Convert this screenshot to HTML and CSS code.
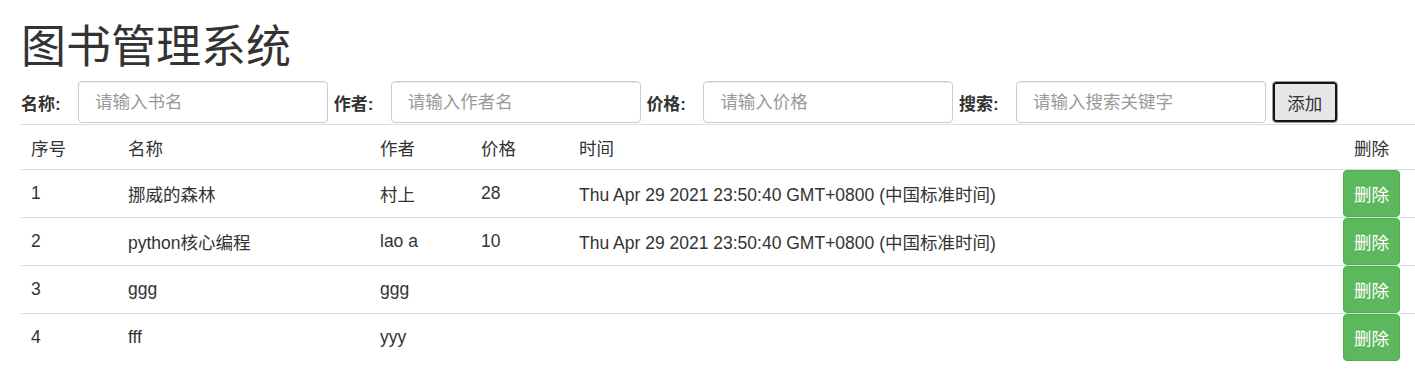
FILE: index.html
```html
<!DOCTYPE html>
<html lang="zh-CN">
<head>
<meta charset="utf-8">
<title>图书管理系统</title>
<link rel="stylesheet" href="styles.css">
</head>
<body>
<h1 class="title">图书管理系统</h1>
<div class="form-row">
  <label class="lbl">名称:</label>
  <input class="field" type="text" placeholder="请输入书名">
  <label class="lbl">作者:</label>
  <input class="field" type="text" placeholder="请输入作者名">
  <label class="lbl">价格:</label>
  <input class="field" type="text" placeholder="请输入价格">
  <label class="lbl">搜索:</label>
  <input class="field" type="text" placeholder="请输入搜索关键字">
  <button class="btn-add" type="button">添加</button>
</div>
<table class="books">
  <colgroup>
    <col class="c-id"><col class="c-name"><col class="c-author"><col class="c-price"><col class="c-time"><col class="c-del">
  </colgroup>
  <thead>
    <tr><th>序号</th><th>名称</th><th>作者</th><th>价格</th><th>时间</th><th class="del">删除</th></tr>
  </thead>
  <tbody>
    <tr><td>1</td><td>挪威的森林</td><td>村上</td><td>28</td><td>Thu Apr 29 2021 23:50:40 GMT+0800 (中国标准时间)</td><td class="del"><button class="btn-del" type="button">删除</button></td></tr>
    <tr><td>2</td><td>python核心编程</td><td>lao a</td><td>10</td><td>Thu Apr 29 2021 23:50:40 GMT+0800 (中国标准时间)</td><td class="del"><button class="btn-del" type="button">删除</button></td></tr>
    <tr><td>3</td><td>ggg</td><td>ggg</td><td></td><td></td><td class="del"><button class="btn-del" type="button">删除</button></td></tr>
    <tr><td>4</td><td>fff</td><td>yyy</td><td></td><td></td><td class="del"><button class="btn-del" type="button">删除</button></td></tr>
  </tbody>
</table>
</body>
</html>
```
FILE: styles.css
```css
html, body {
  margin: 0;
  padding: 0;
  background: #fff;
}
body {
  padding-left: 21px;
  font-family: "Liberation Sans", "Noto Sans CJK SC", sans-serif;
  font-size: 17.5px;
  color: #333;
}
.title {
  margin: 13px 0 0 0;
  font-size: 45px;
  font-weight: 400;
  line-height: 62px;
  height: 68px;
  color: #333;
  font-family: "Noto Sans CJK SC", "Liberation Sans", sans-serif;
}
.form-row {
  display: flex;
  align-items: center;
  height: 42px;
  margin-bottom: 1px;
}
.lbl {
  box-sizing: border-box;
  width: 57px;
  padding-right: 14px;
  font-weight: bold;
  font-size: 17px;
  white-space: nowrap;
}
.field {
  box-sizing: border-box;
  width: 250px;
  height: 42px;
  margin-right: 5.7px;
  padding: 0 16px;
  border: 1px solid #ccc;
  border-radius: 4px;
  box-shadow: inset 0 1px 1px rgba(0,0,0,.075);
  font-family: "Liberation Sans", "Noto Sans CJK SC", sans-serif;
  font-size: 17.5px;
  color: #555;
  background: #fff;
}
.field::placeholder {
  color: #999;
}
.btn-add {
  box-sizing: border-box;
  width: 66px;
  height: 42px;
  border: 1px solid #999;
  border-radius: 4px;
  box-shadow: inset 0 0 0 2px #151515;
  background: #e6e6e6;
  color: #333;
  font-family: "Liberation Sans", "Noto Sans CJK SC", sans-serif;
  font-size: 17.5px;
  padding: 0;
}
.books {
  width: 100%;
  border-collapse: collapse;
  table-layout: fixed;
}
.c-id { width: 97px; }
.c-name { width: 252px; }
.c-author { width: 101px; }
.c-price { width: 98px; }
.c-del { width: 72px; }
.books th, .books td {
  border-top: 1px solid #ddd;
  padding: 0 10px;
  text-align: left;
  vertical-align: middle;
  font-weight: normal;
  white-space: nowrap;
}
.books th {
  height: 44px;
}
.books td {
  height: 47px;
}
.books .del {
  padding: 0 15px 0 0;
  text-align: center;
}
.btn-del {
  box-sizing: border-box;
  width: 57px;
  height: 47px;
  display: block;
  border: 1px solid #4cae4c;
  border-radius: 4px;
  background: #5cb85c;
  color: #fff;
  font-family: "Liberation Sans", "Noto Sans CJK SC", sans-serif;
  font-size: 17.5px;
  padding: 0;
}
```
